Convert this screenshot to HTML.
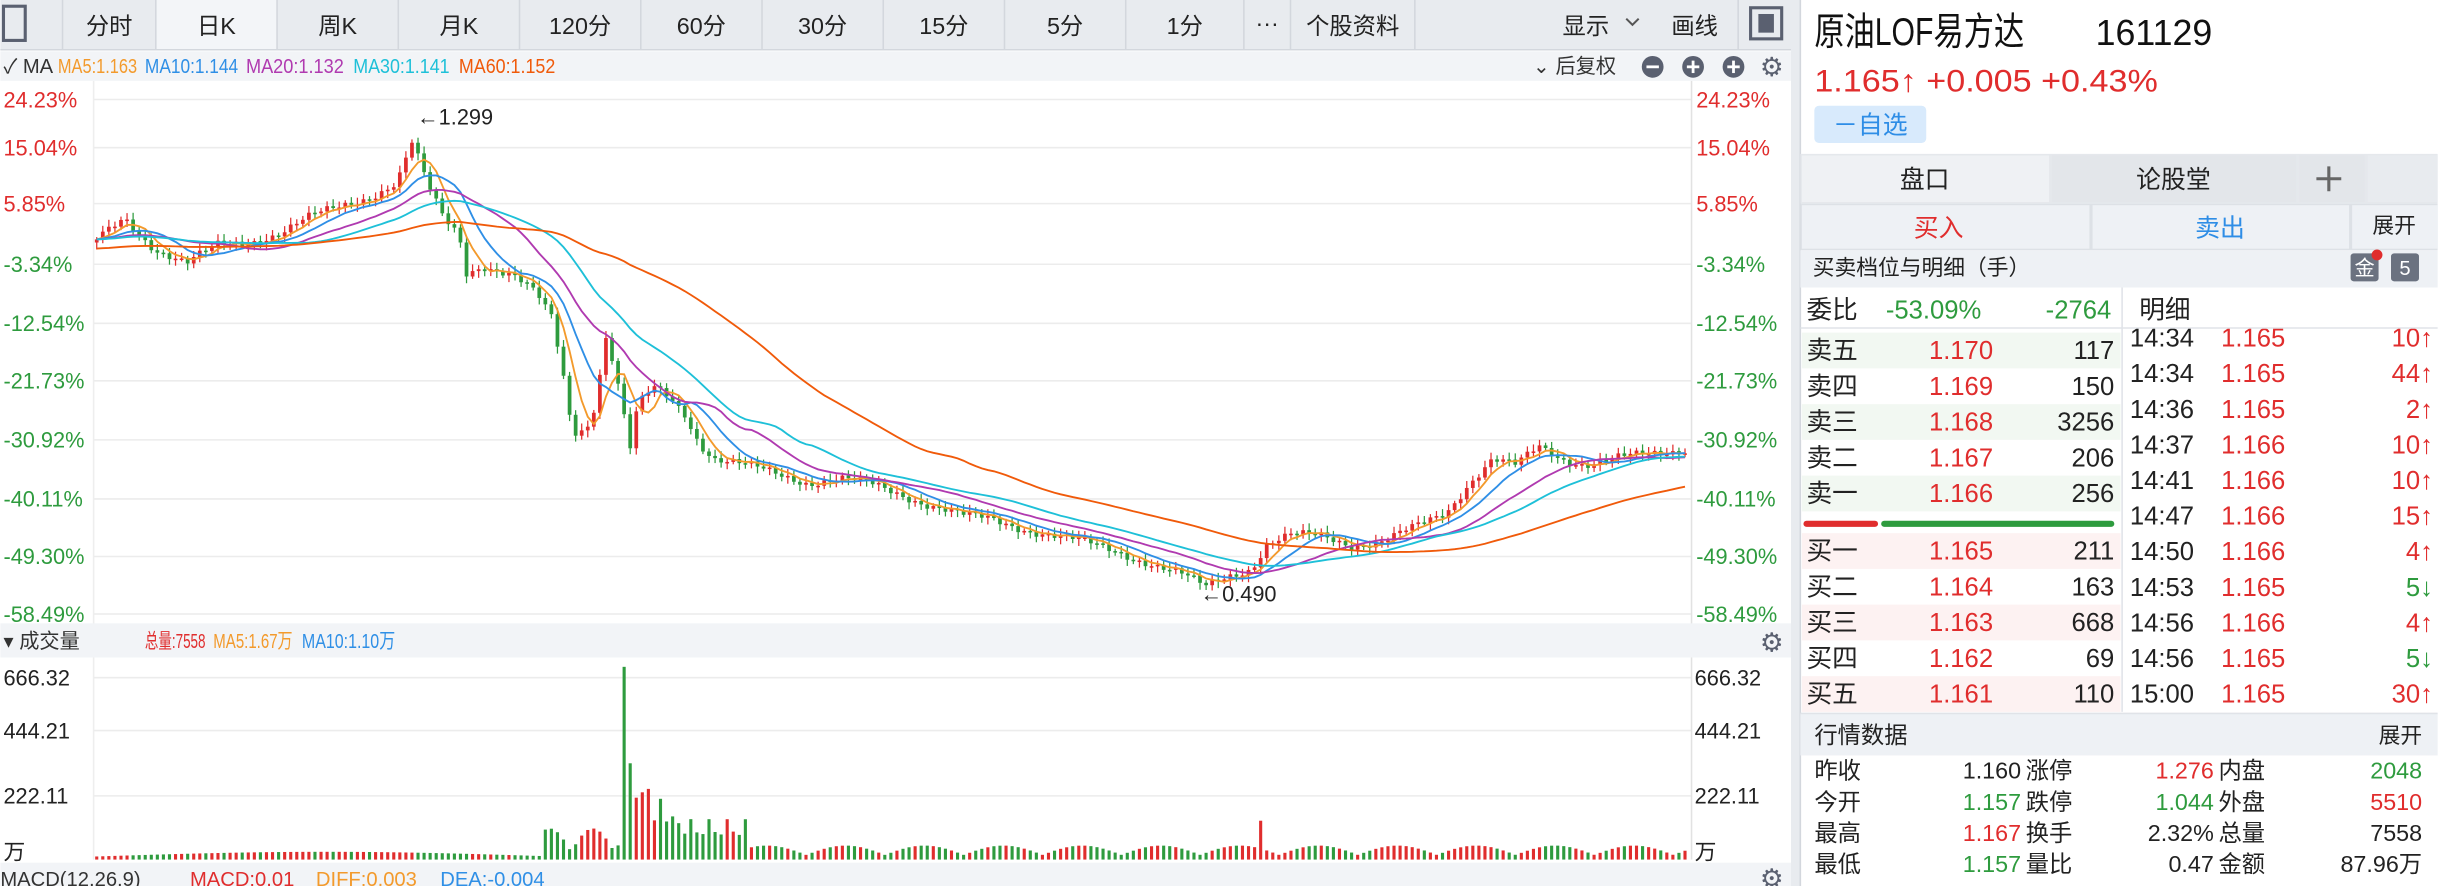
<!DOCTYPE html>
<html><head><meta charset="utf-8">
<style>
html,body{margin:0;padding:0;background:#fff;width:2438px;height:886px;overflow:hidden}
svg{display:block;font-family:"Liberation Sans","Noto Sans CJK SC",sans-serif}
</style></head>
<body>
<svg id="s" width="2438" height="886" viewBox="0 0 1568 570" xmlns="http://www.w3.org/2000/svg">
<rect x="0" y="0" width="1155" height="32" fill="#e8ebef"/>
<rect x="100" y="0" width="78" height="32" fill="#f3f5f8"/>
<g stroke="#d3d7dd" stroke-width="1">
<line x1="40" y1="0" x2="40" y2="32"/><line x1="100" y1="0" x2="100" y2="32"/><line x1="178" y1="0" x2="178" y2="32"/><line x1="256" y1="0" x2="256" y2="32"/><line x1="334" y1="0" x2="334" y2="32"/><line x1="412" y1="0" x2="412" y2="32"/><line x1="490" y1="0" x2="490" y2="32"/><line x1="568" y1="0" x2="568" y2="32"/><line x1="646" y1="0" x2="646" y2="32"/><line x1="724" y1="0" x2="724" y2="32"/><line x1="800" y1="0" x2="800" y2="32"/><line x1="830" y1="0" x2="830" y2="32"/><line x1="910" y1="0" x2="910" y2="32"/><line x1="1118" y1="0" x2="1118" y2="32"/>
<line x1="0" y1="32" x2="1155" y2="32"/>
</g>
<rect x="2" y="4" width="14" height="22" fill="none" stroke="#5a6070" stroke-width="2"/>
<rect x="1126" y="5" width="20" height="20" fill="none" stroke="#5a6070" stroke-width="2"/><rect x="1131" y="9" width="10" height="12" fill="#5a6070"/>
<g font-size="15" fill="#222" text-anchor="middle">
<text x="70" y="22">分时</text><text x="139" y="22">日K</text><text x="217" y="22">周K</text><text x="295" y="22">月K</text><text x="373" y="22">120分</text><text x="451" y="22">60分</text><text x="529" y="22">30分</text><text x="607" y="22">15分</text><text x="685" y="22">5分</text><text x="762" y="22">1分</text><text x="815" y="20">···</text><text x="870" y="22">个股资料</text>
<text x="1020" y="22">显示</text><text x="1090" y="22">画线</text></g>
<path d="M1046 12 l4 4 l4 -4" fill="none" stroke="#555" stroke-width="1.3"/>
<rect x="0" y="33" width="1155" height="19" fill="#f2f4f7"/>
<g font-size="13"><text x="2" y="47" fill="#333">✓ MA</text>
<text x="37" y="47" fill="#f39a2c" textLength="51" lengthAdjust="spacingAndGlyphs">MA5:1.163</text><text x="93" y="47" fill="#2f8fe6" textLength="60" lengthAdjust="spacingAndGlyphs">MA10:1.144</text><text x="158" y="47" fill="#b03ab0" textLength="63" lengthAdjust="spacingAndGlyphs">MA20:1.132</text><text x="227" y="47" fill="#1ec0d8" textLength="62" lengthAdjust="spacingAndGlyphs">MA30:1.141</text><text x="295" y="47" fill="#f05a0a" textLength="62" lengthAdjust="spacingAndGlyphs">MA60:1.152</text>
<text x="986" y="47" fill="#333">⌄ 后复权</text></g>
<g fill="#5a6070"><circle cx="1063" cy="43" r="7"/><circle cx="1089" cy="43" r="7"/><circle cx="1115" cy="43" r="7"/></g>
<g stroke="#fff" stroke-width="1.8"><line x1="1059" y1="43" x2="1067" y2="43"/><line x1="1085" y1="43" x2="1093" y2="43"/><line x1="1089" y1="39" x2="1089" y2="47"/><line x1="1111" y1="43" x2="1119" y2="43"/><line x1="1115" y1="39" x2="1115" y2="47"/></g>
<text x="1132" y="49" font-size="17" fill="#5a6070">⚙</text>
<g id="grid" stroke="#ececec" stroke-width="1"></g>
<line x1="1088" y1="52" x2="1088" y2="553" stroke="#e2e2e2"/>
<line x1="60" y1="52" x2="60" y2="553" stroke="#eeeeee"/>
<g id="ylab" font-size="14"></g>
<g id="cand"></g>
<g id="mas" fill="none" stroke-width="1.2"></g>
<text x="268" y="80" font-size="14" fill="#222">←1.299</text>
<text x="772" y="387" font-size="14" fill="#222">←0.490</text>
<rect x="0" y="401" width="1155" height="22" fill="#f2f4f7"/>
<g font-size="13"><text x="2" y="417" fill="#333">▾ 成交量</text><text x="93" y="417" fill="#e02d2d" textLength="39" lengthAdjust="spacingAndGlyphs">总量:7558</text><text x="137" y="417" fill="#f39a2c" textLength="51" lengthAdjust="spacingAndGlyphs">MA5:1.67万</text><text x="194" y="417" fill="#2f8fe6" textLength="60" lengthAdjust="spacingAndGlyphs">MA10:1.10万</text></g>
<text x="1132" y="419" font-size="17" fill="#5a6070">⚙</text>
<g font-size="14" fill="#222"><text x="2" y="441">666.32</text><text x="2" y="475">444.21</text><text x="2" y="517">222.11</text><text x="2" y="553">万</text>
<text x="1090" y="441">666.32</text><text x="1090" y="475">444.21</text><text x="1090" y="517">222.11</text><text x="1090" y="553">万</text></g>
<g id="vol"></g>
<rect x="0" y="555" width="1155" height="15" fill="#f2f4f7"/>
<g font-size="13"><text x="0" y="570" fill="#333">MACD(12,26,9)</text><text x="122" y="570" fill="#e02d2d">MACD:0.01</text><text x="203" y="570" fill="#f39a2c">DIFF:0.003</text><text x="283" y="570" fill="#2f8fe6">DEA:-0.004</text></g>
<text x="1132" y="571" font-size="17" fill="#5a6070">⚙</text>
<rect x="1152" y="0" width="6" height="570" fill="#e8ebef"/>
<line x1="1158" y1="0" x2="1158" y2="570" stroke="#d3d7dd"/>
<text x="1167" y="29" font-size="25" fill="#111" textLength="135" lengthAdjust="spacingAndGlyphs">原油LOF易方达</text>
<text x="1348" y="29" font-size="23" fill="#111">161129</text>
<text x="1167" y="59" font-size="20" fill="#e02d2d" textLength="221" lengthAdjust="spacingAndGlyphs">1.165↑ +0.005 +0.43%</text>
<rect x="1167" y="68" width="72" height="24" rx="3" fill="#d8eafc"/>
<text x="1179" y="86" font-size="16" fill="#2e8de6">－自选</text>
<rect x="1158" y="99" width="410" height="32" fill="#e5e8ec"/>
<rect x="1159" y="100" width="159" height="30" fill="#eff1f4"/>
<rect x="1320" y="100" width="157" height="30" fill="#e3e6ea"/>
<rect x="1479" y="100" width="42" height="30" fill="#e3e6ea"/>
<rect x="1523" y="100" width="45" height="30" fill="#e8ebef"/>
<g font-size="16" fill="#222" text-anchor="middle"><text x="1238" y="121">盘口</text><text x="1398" y="121">论股堂</text></g>
<path d="M1490 115 h16 M1498 107 v16" stroke="#666" stroke-width="2"/>
<rect x="1158" y="131" width="410" height="30" fill="#dde1e6"/>
<rect x="1159" y="132" width="185" height="28" fill="#eef1f5"/>
<rect x="1346" y="132" width="165" height="28" fill="#eef1f5"/>
<rect x="1513" y="132" width="55" height="28" fill="#eef1f5"/>
<g font-size="16" text-anchor="middle"><text x="1247" y="152" fill="#e02d2d">买入</text><text x="1428" y="152" fill="#2e8de6">卖出</text></g>
<text x="1540" y="150" font-size="14" fill="#222" text-anchor="middle">展开</text>
<rect x="1158" y="161" width="410" height="24" fill="#eef1f5"/>
<text x="1166" y="177" font-size="14" fill="#222">买卖档位与明细（手）</text>
<rect x="1512" y="163" width="18" height="18" rx="2" fill="#6b7280"/><text x="1521" y="177" font-size="13" fill="#fff" text-anchor="middle">金</text><circle cx="1529" cy="164" r="3.5" fill="#e02d2d"/>
<rect x="1538" y="163" width="18" height="18" rx="2" fill="#6b7280"/><text x="1547" y="177" font-size="13" fill="#fff" text-anchor="middle">5</text>
<line x1="1365" y1="185" x2="1365" y2="458" stroke="#e0e3e8"/>
<g font-size="16.5"><text x="1162" y="205" fill="#222">委比</text><text x="1213" y="205" fill="#2e9b3e">-53.09%</text><text x="1358" y="205" fill="#2e9b3e" text-anchor="end">-2764</text></g>
<g id="book" font-size="16.5"></g>
<rect x="1160" y="335" width="48" height="4" rx="2" fill="#e02d2d"/><rect x="1210" y="335" width="150" height="4" rx="2" fill="#2e9b3e"/>
<rect x="1158" y="459" width="410" height="27" fill="#eef1f5"/>
<line x1="1158" y1="459" x2="1568" y2="459" stroke="#e0e3e8"/>
<text x="1167" y="478" font-size="15" fill="#222">行情数据</text><text x="1558" y="478" font-size="14" fill="#222" text-anchor="end">展开</text>
<g font-size="15">
<text x="1167" y="501" fill="#222">昨收</text><text x="1300" y="501" fill="#222" text-anchor="end">1.160</text><text x="1303" y="501" fill="#222">涨停</text><text x="1424" y="501" fill="#e02d2d" text-anchor="end">1.276</text><text x="1427" y="501" fill="#222">内盘</text><text x="1558" y="501" fill="#2e9b3e" text-anchor="end">2048</text>
<text x="1167" y="521" fill="#222">今开</text><text x="1300" y="521" fill="#2e9b3e" text-anchor="end">1.157</text><text x="1303" y="521" fill="#222">跌停</text><text x="1424" y="521" fill="#2e9b3e" text-anchor="end">1.044</text><text x="1427" y="521" fill="#222">外盘</text><text x="1558" y="521" fill="#e02d2d" text-anchor="end">5510</text>
<text x="1167" y="541" fill="#222">最高</text><text x="1300" y="541" fill="#e02d2d" text-anchor="end">1.167</text><text x="1303" y="541" fill="#222">换手</text><text x="1424" y="541" fill="#222" text-anchor="end">2.32%</text><text x="1427" y="541" fill="#222">总量</text><text x="1558" y="541" fill="#222" text-anchor="end">7558</text>
<text x="1167" y="561" fill="#222">最低</text><text x="1300" y="561" fill="#2e9b3e" text-anchor="end">1.157</text><text x="1303" y="561" fill="#222">量比</text><text x="1424" y="561" fill="#222" text-anchor="end">0.47</text><text x="1427" y="561" fill="#222">金额</text><text x="1558" y="561" fill="#222" text-anchor="end">87.96万</text>
</g>
</svg>
<script>
(function(){
var NS="http://www.w3.org/2000/svg";
function el(p,t,a,txt){var e=document.createElementNS(NS,t);for(var k in a)e.setAttribute(k,a[k]);if(txt!==undefined)e.textContent=txt;document.getElementById(p).appendChild(e);return e;}
var labs=[["24.23%",64,"#e02d2d"],["15.04%",95,"#e02d2d"],["5.85%",131,"#e02d2d"],["-3.34%",170,"#2e9b3e"],["-12.54%",208,"#2e9b3e"],["-21.73%",245,"#2e9b3e"],["-30.92%",283,"#2e9b3e"],["-40.11%",321,"#2e9b3e"],["-49.30%",358,"#2e9b3e"],["-58.49%",395,"#2e9b3e"]];
labs.forEach(function(l){el("grid","line",{x1:60,x2:1088,y1:l[1],y2:l[1]});el("ylab","text",{x:2,y:l[1]+5,fill:l[2]},l[0]);el("ylab","text",{x:1091,y:l[1]+5,fill:l[2]},l[0]);});
[436,470,512].forEach(function(y){el("grid","line",{x1:60,x2:1088,y1:y,y2:y});});
var kp=[[62,155],[80,140],[100,160],[120,170],[140,158],[160,155],[180,150],[200,140],[220,132],[240,125],[255,118],[265,92],[275,120],[285,140],[295,150],[300,175],[310,170],[330,178],[345,190],[355,205],[362,240],[368,278],[380,272],[390,215],[398,250],[405,290],[410,262],[420,250],[430,255],[440,265],[450,285],[460,295],[480,300],[500,305],[520,310],[540,308],[560,312],[580,318],[600,325],[620,332],[640,335],[660,340],[680,345],[700,350],[720,355],[740,362],[760,370],[775,378],[790,370],[805,365],[815,350],[830,345],[850,345],[870,350],[890,348],[910,340],[930,330],[945,310],[960,295],[975,300],[990,288],[1005,295],[1020,298],[1040,295],[1060,293],[1086,288]];
function interp(x){for(var i=1;i<kp.length;i++){if(x<=kp[i][0]){var a=kp[i-1],b=kp[i];return a[1]+(b[1]-a[1])*(x-a[0])/(b[0]-a[0]);}}return kp[kp.length-1][1];}
var step=3.9,xs=[],cl=[];
for(var x=62;x<=1086;x+=step){xs.push(x);cl.push(interp(x)+Math.sin(x*1.7)*2.5+Math.sin(x*0.53)*1.5);}
var n=xs.length;
for(var i=0;i<n;i++){var o=i?cl[i-1]:cl[0]+2,c=cl[i];var hi=Math.min(o,c)-1.5-Math.abs(Math.sin(i*2.3))*3,lo=Math.max(o,c)+1.5+Math.abs(Math.cos(i*1.9))*3;
var col=c<=o?"#e02d2d":"#2e9b3e";el("cand","line",{x1:xs[i],x2:xs[i],y1:hi,y2:lo,stroke:col,"stroke-width":0.8});
el("cand","rect",{x:xs[i]-1.2,y:Math.min(o,c),width:2.4,height:Math.max(1,Math.abs(o-c)),fill:col});
var X=xs[i],v;
if(X<350)v=2+Math.abs(Math.sin(i*3.1))*3;else if(X<400)v=5+Math.abs(Math.sin(i*2.7))*15;else if(X<404)v=124;else if(X<440)v=20+Math.abs(Math.sin(i*1.3))*45*(440-X)/36;else if(X<480)v=8+Math.abs(Math.sin(i*2.1))*18;else v=3+Math.abs(Math.sin(i*2.9))*6;
if(Math.abs(X-810)<2)v=25;
el("vol","rect",{x:X-1,y:553-v,width:2,height:v,fill:col});}
function ma(p,pad,colr,arr){var pts=[];for(var i=0;i<n;i++){var s=0;for(var j=i-p+1;j<=i;j++)s+=j>=0?arr[j]:pad;pts.push(xs[i].toFixed(1)+","+(s/p).toFixed(1));}
el("mas","polyline",{points:pts.join(" "),stroke:colr});}
ma(5,cl[0],"#f39a2c",cl);ma(10,cl[0],"#2f8fe6",cl);ma(20,cl[0],"#b03ab0",cl);ma(30,cl[0],"#1ec0d8",cl);ma(60,160,"#f05a0a",cl);
var sell=[["卖五","1.170","117"],["卖四","1.169","150"],["卖三","1.168","3256"],["卖二","1.167","206"],["卖一","1.166","256"]];
var buy=[["买一","1.165","211"],["买二","1.164","163"],["买三","1.163","668"],["买四","1.162","69"],["买五","1.161","110"]];
sell.forEach(function(r,i){var y=214+i*23;if(i%2==0)el("book","rect",{x:1159,y:y,width:205,height:23,fill:"#f2f8f2"});
el("book","text",{x:1162,y:y+17,fill:"#222"},r[0]);el("book","text",{x:1282,y:y+17,fill:"#e02d2d","text-anchor":"end"},r[1]);el("book","text",{x:1360,y:y+17,fill:"#222","text-anchor":"end"},r[2]);});
buy.forEach(function(r,i){var y=343+i*23;if(i%2==0)el("book","rect",{x:1159,y:y,width:205,height:23,fill:"#fdf2f2"});
el("book","text",{x:1162,y:y+17,fill:"#222"},r[0]);el("book","text",{x:1282,y:y+17,fill:"#e02d2d","text-anchor":"end"},r[1]);el("book","text",{x:1360,y:y+17,fill:"#222","text-anchor":"end"},r[2]);});
var det=[["14:34","1.165","10↑","#e02d2d"],["14:34","1.165","44↑","#e02d2d"],["14:36","1.165","2↑","#e02d2d"],["14:37","1.166","10↑","#e02d2d"],["14:41","1.166","10↑","#e02d2d"],["14:47","1.166","15↑","#e02d2d"],["14:50","1.166","4↑","#e02d2d"],["14:53","1.165","5↓","#2e9b3e"],["14:56","1.166","4↑","#e02d2d"],["14:56","1.165","5↓","#2e9b3e"],["15:00","1.165","30↑","#e02d2d"]];
det.forEach(function(r,i){var y=223+i*22.9;el("book","text",{x:1370,y:y,fill:"#222"},r[0]);el("book","text",{x:1470,y:y,fill:"#e02d2d","text-anchor":"end"},r[1]);el("book","text",{x:1565,y:y,fill:r[3],"text-anchor":"end"},r[2]);});
el("book","rect",{x:1366,y:185,width:202,height:26,fill:"#fff"});
el("book","text",{x:1376,y:205,fill:"#222"},"明细");
el("book","line",{x1:1158,x2:1568,y1:211,y2:211,stroke:"#e0e3e8"});
})();
</script>
</body></html>
